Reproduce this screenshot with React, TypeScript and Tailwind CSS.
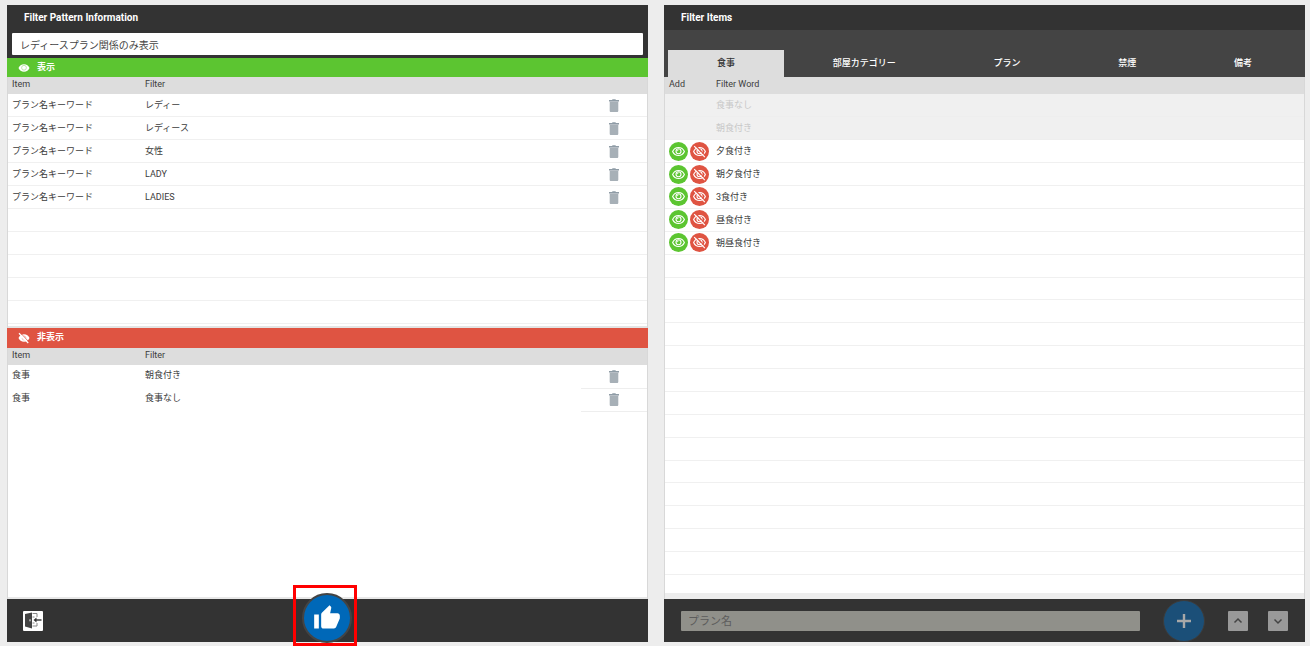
import React from "react";

const EYE = "M12 4.5C7 4.5 2.73 7.61 1 12c1.73 4.39 6 7.5 11 7.5s9.27-3.11 11-7.5c-1.73-4.39-6-7.5-11-7.5z";

function SolidEye({ off = false }: { off?: boolean }) {
  return (
    <svg viewBox="0 0 24 24" className="h-3 w-3" aria-hidden="true">
      <path d={EYE} fill="#fff" />
      {off ? (
        <>
          <path d="M8 12a4.3 4.3 0 0 0 5 4.2M16 12a4.3 4.3 0 0 0-4-4.2" fill="none" stroke="#eba69c" strokeWidth="1.2" />
          <path d="M5 1.8 22 20" stroke="#df5442" strokeWidth="1.6" />
          <path d="M2 2.500 20.500 22" stroke="#fff" strokeWidth="2.4" />
        </>
      ) : (
        <circle cx="12" cy="11.5" r="4.8" fill="none" stroke="#9bdb80" strokeWidth="1.300" />
      )}
    </svg>
  );
}

function LineEye({ off = false }: { off?: boolean }) {
  return (
    <svg viewBox="0 0 24 24" className="h-[15px] w-[15px]" fill="none" stroke="#fff" strokeWidth="1.8" aria-hidden="true">
      <path d="M2.6 12C4.4 8 8 5.6 12 5.6S19.6 8 21.4 12C19.6 16 16 18.4 12 18.4S4.4 16 2.6 12z" />
      <circle cx="12" cy="11.6" r="4" />
      <path d="M10 11.500a2 2 0 0 1 2-2" strokeWidth="1.400" />
      {off && (
        <>
          <path d="M6 2.8 22 19.5" stroke="#df5442" />
          <path d="M3.5 3.5 20.5 21" />
        </>
      )}
    </svg>
  );
}

function TrashButton({ name }: { name: string }) {
  return (
    <button type="button" aria-label={`Delete ${name}`} className="mx-auto block">
      <svg viewBox="0 0 10 13" className="h-[13px] w-[10px]" aria-hidden="true">
        <path d="M0 1h3l.6-.7h2.8L7 1h3v1.500H0z" fill="#8f9ca6" />
        <path d="M.7 2.500h8.600v9.200c0 .7-.5 1.300-1.200 1.300H1.900c-.7 0-1.200-.6-1.200-1.300z" fill="#a7b0b7" />
      </svg>
    </button>
  );
}

const shown = ["レディー", "レディース", "女性", "LADY", "LADIES"];
const hidden = ["朝食付き", "食事なし"];
const tabs = ["食事", "部屋カテゴリー", "プラン", "禁煙", "備考"];
const words = ["食事なし", "朝食付き", "夕食付き", "朝夕食付き", "3食付き", "昼食付き", "朝昼食付き"];

function FilterHead() {
  return (
    <thead>
      <tr className="h-[17px] bg-[#ddd] text-left align-top leading-[15px]">
        <th className="w-[133px] pl-1 font-normal">Item</th>
        <th className="pl-1 font-normal">Filter</th>
        <th className="w-[66px]" aria-label="Delete" />
      </tr>
    </thead>
  );
}

export default function App() {
  return (
    <div className="min-h-screen bg-white pr-[3px] pb-0.5 font-['Roboto','Noto_Sans_CJK_JP',sans-serif] text-[9px] text-[#3c3c3c]">
      <main className="flex min-h-[calc(100vh-2px)] gap-4 bg-[#ededed] pt-[5px] pr-[5px] pb-1 pl-[7px]">
        <section className="flex min-w-0 flex-1 flex-col border border-[#d8d8d8] bg-white">
          <header className="-mx-px -mt-px bg-[#333] px-[5px] pb-[3px]">
            <h1 className="h-7 pl-3 text-[10px] leading-[25px] font-bold text-white">Filter Pattern Information</h1>
            <input
              aria-label="Filter pattern name"
              defaultValue="レディースプラン関係のみ表示"
              className="block h-[22px] w-full rounded-[1px] bg-white px-2 text-[10px] text-[#444] outline-none"
            />
          </header>
          <h2 className="-mx-px flex h-[19px] items-center gap-[7px] bg-[#5cc531] pt-px pl-[11px] font-bold text-white">
            <SolidEye />
            表示
          </h2>
          <div className="flex h-[251px] flex-col">
            <table className="w-full table-fixed border-collapse">
              <FilterHead />
            </table>
            <table className="h-[230px] w-full table-fixed border-collapse">
              <tbody>
                {Array.from({ length: 10 }, (_, i) => (
                  <tr key={i} className="h-[22px] border-b border-[#f0f0f0] leading-4">
                    <td className="w-[133px] pl-1">{shown[i] && "プラン名キーワード"}</td>
                    <td className="pl-1">{shown[i]}</td>
                    <td className="w-[66px]">{shown[i] && <TrashButton name={shown[i]} />}</td>
                  </tr>
                ))}
              </tbody>
            </table>
            <div className="mt-0.5 flex-1 bg-[#e4e4e4]" />
          </div>
          <h2 className="-mx-px flex h-5 items-center gap-[7px] bg-[#df5442] pl-[11px] font-bold text-white">
            <SolidEye off />
            非表示
          </h2>
          <table className="w-full table-fixed border-collapse">
            <FilterHead />
            <tbody>
              {hidden.map((word) => (
                <tr key={word} className="h-[23px] leading-5">
                  <td className="pl-1 align-top">食事</td>
                  <td className="pl-1 align-top">{word}</td>
                  <td className="border-b border-[#eee]"><TrashButton name={word} /></td>
                </tr>
              ))}
            </tbody>
          </table>
          <div className="flex-1 border-b-2 border-[#e8e8e8]" />
          <footer className="-mx-px -mb-px flex h-[43px] items-center bg-[#333]">
            <button type="button" aria-label="Exit" className="ml-4 h-5 w-5 rounded-[1px] bg-white">
              <svg viewBox="0 0 20 20" className="h-5 w-5" fill="none" aria-hidden="true">
                <path d="M2 3 9 1.500V17.500L2 15.500z" fill="#444" />
                <path d="M7 8.300v2" stroke="#fff" />
                <path d="M9.500 2.500h4.500v3.500M14 12v3H9.500M9.500 6h2M9.500 12h2" stroke="#888" />
                <path d="M18.500 9h-6" stroke="#333" strokeWidth="1.400" />
                <path d="M10.500 9 13.500 6.500v5z" fill="#333" />
              </svg>
            </button>
            <div className="flex flex-1 justify-center pr-[42px]">
              <div className="-mt-2.5 flex h-[61px] w-16 items-center justify-center border-[3px] border-[#f00]">
                <button type="button" aria-label="Save" className="mt-1 ml-1 flex h-[50px] w-[50px] shrink-0 items-center justify-center rounded-full border-2 border-[#444] bg-[#0068b8]">
                  <svg viewBox="0 0 24 24" className="h-7 w-7" fill="#fff" aria-hidden="true">
                    <path d="M1 21h4V9H1v12zm22-11c0-1.100-.9-2-2-2h-6.310l.95-4.570.03-.32c0-.41-.17-.79-.44-1.060L14.170 1 7.590 7.590C7.220 7.950 7 8.450 7 9v10c0 1.100.9 2 2 2h9c.83 0 1.540-.5 1.840-1.220l3.020-7.050c.09-.23.14-.47.14-.73v-2z" />
                  </svg>
                </button>
              </div>
            </div>
          </footer>
        </section>

        <section className="flex min-w-0 flex-1 flex-col border border-[#d8d8d8] bg-white">
          <header className="-mx-px -mt-px bg-[#444]">
            <h1 className="h-[25px] bg-[#333] pl-[17px] text-[10px] leading-[25px] font-bold text-white">Filter Items</h1>
            <div role="tablist" className="flex px-1 pt-5">
              {tabs.map((tab, i) => (
                <button
                  key={tab}
                  type="button"
                  role="tab"
                  aria-selected={i === 0}
                  className={i === 0 ? "h-[27px] flex-auto bg-[#ddd] font-medium text-[#333]" : "h-[27px] flex-auto font-medium text-white"}
                >
                  {tab}
                </button>
              ))}
            </div>
          </header>
          <table className="w-full table-fixed border-collapse">
            <thead>
              <tr className="h-[17px] bg-[#ddd] text-left align-top leading-[15px]">
                <th className="w-[47px] pl-1 font-normal">Add</th>
                <th className="pl-1 font-normal">Filter Word</th>
              </tr>
            </thead>
          </table>
          <table className="h-[481px] w-full table-fixed border-collapse">
            <tbody>
              {Array.from({ length: 21 }, (_, i) => (
                <tr key={i} className={i < 2 ? "h-[22px] border-b border-[#eee] bg-[#f0f0f0] leading-4 text-[#c8c8c8]" : "h-[22px] border-b border-[#f0f0f0] leading-4"}>
                  <td className="w-[47px] pl-1">
                    {i > 1 && words[i] && (
                      <div className="flex gap-0.5">
                        <button type="button" aria-label={`Show ${words[i]}`} className="flex h-[19px] w-[19px] items-center justify-center rounded-full bg-[#5cc531]">
                          <LineEye />
                        </button>
                        <button type="button" aria-label={`Hide ${words[i]}`} className="flex h-[19px] w-[19px] items-center justify-center rounded-full bg-[#df5442]">
                          <LineEye off />
                        </button>
                      </div>
                    )}
                  </td>
                  <td className="pl-1">{words[i]}</td>
                </tr>
              ))}
            </tbody>
          </table>
          <div className="flex-1 border-b-[6px] border-[#ededed]" />
          <footer className="-mx-px -mb-px flex h-[43px] items-center bg-[#333] pr-[17px] pl-[17px]">
            <input
              aria-label="Plan name"
              placeholder="プラン名"
              disabled
              className="h-5 min-w-0 flex-1 rounded-[1px] bg-[#90908a] px-[7px] pt-0.5 text-[11px] placeholder:text-[#5c5c5c]"
            />
            <button type="button" disabled aria-label="Add" className="ml-[23px] flex h-[42px] w-[42px] items-center justify-center rounded-full border border-[#3c3c3c] bg-[#1b4f78]">
              <svg viewBox="0 0 14 14" className="h-[14px] w-[14px]" stroke="#a8a8a8" strokeWidth="2.400" aria-hidden="true">
                <path d="M7 0v14M0 7h14" />
              </svg>
            </button>
            {["M3.500 7.500 7 4l3.500 3.500", "M3.500 4.500 7 8l3.500-3.500"].map((d, i) => (
              <button key={d} type="button" disabled aria-label={i === 0 ? "Up" : "Down"} className={i === 0 ? "ml-[23px] flex h-5 w-5 items-center justify-center rounded-[1px] bg-[#999]" : "ml-5 flex h-5 w-5 items-center justify-center rounded-[1px] bg-[#999]"}>
                <svg viewBox="0 0 14 12" className="h-3 w-[14px]" fill="none" stroke="#444" strokeWidth="1.500" aria-hidden="true">
                  <path d={d} />
                </svg>
              </button>
            ))}
          </footer>
        </section>
      </main>
    </div>
  );
}
